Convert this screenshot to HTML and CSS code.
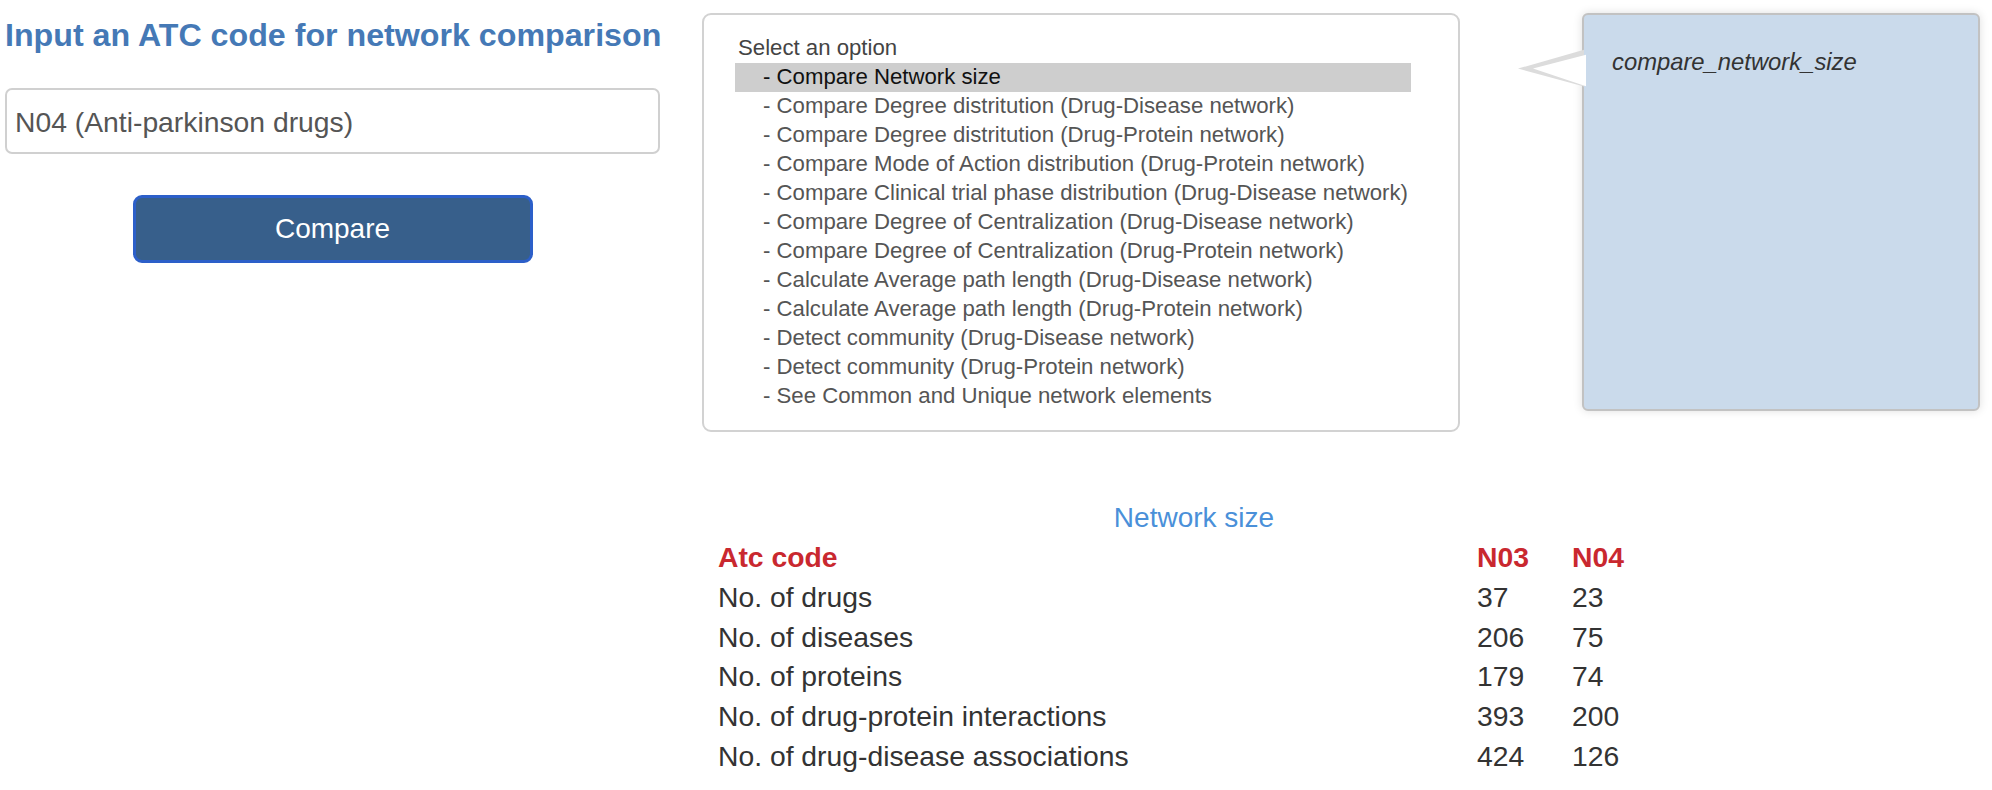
FILE: index.html
```html
<!DOCTYPE html>
<html lang="en">
<head>
<meta charset="utf-8">
<title>ATC network comparison</title>
<link rel="stylesheet" href="styles.css">
</head>
<body>
<div class="page">
  <div class="top">
    <div class="left">
      <h3 class="title">Input an ATC code for network comparison</h3>
      <div class="atc-input">N04 (Anti-parkinson drugs)</div>
      <div class="btn-row"><button class="btn" type="button">Compare</button></div>
    </div>

    <div class="select-box">
      <div class="list">
        <div class="opt group">Select an option</div>
        <div class="opt sub selected">- Compare Network size</div>
        <div class="opt sub">- Compare Degree distritution (Drug-Disease network)</div>
        <div class="opt sub">- Compare Degree distritution (Drug-Protein network)</div>
        <div class="opt sub">- Compare Mode of Action distribution (Drug-Protein network)</div>
        <div class="opt sub">- Compare Clinical trial phase distribution (Drug-Disease network)</div>
        <div class="opt sub">- Compare Degree of Centralization (Drug-Disease network)</div>
        <div class="opt sub">- Compare Degree of Centralization (Drug-Protein network)</div>
        <div class="opt sub">- Calculate Average path length (Drug-Disease network)</div>
        <div class="opt sub">- Calculate Average path length (Drug-Protein network)</div>
        <div class="opt sub">- Detect community (Drug-Disease network)</div>
        <div class="opt sub">- Detect community (Drug-Protein network)</div>
        <div class="opt sub">- See Common and Unique network elements</div>
      </div>
    </div>

    <div class="bubble">
      <svg class="bubble-arrow" width="72" height="46" viewBox="0 0 72 46">
        <polygon points="2,23.6 68,4.8 68,41.6" fill="#dcdcdc"/>
        <polygon points="17,23.6 70,9.8 70,41.3" fill="#ffffff"/>
      </svg>
      <div class="bubble-text">compare_network_size</div>
    </div>
  </div>

  <div class="result">
    <div class="caption">Network size</div>
    <div class="table">
      <div class="cell head">Atc code</div><div class="cell head">N03</div><div class="cell head">N04</div>
      <div class="cell">No. of drugs</div><div class="cell">37</div><div class="cell">23</div>
      <div class="cell">No. of diseases</div><div class="cell">206</div><div class="cell">75</div>
      <div class="cell">No. of proteins</div><div class="cell">179</div><div class="cell">74</div>
      <div class="cell">No. of drug-protein interactions</div><div class="cell">393</div><div class="cell">200</div>
      <div class="cell">No. of drug-disease associations</div><div class="cell">424</div><div class="cell">126</div>
    </div>
  </div>
</div>
</body>
</html>
```

FILE: styles.css
```css
* { box-sizing: border-box; }

body {
  margin: 0;
  background: #ffffff;
  color: #333333;
  font-family: "Liberation Sans", Arial, Helvetica, sans-serif;
}

.top {
  display: flex;
  align-items: flex-start;
  padding-left: 5px;
}

/* left column */
.left {
  width: 655px;
  flex: none;
}

.title {
  margin: 17px 0 0 0;
  font-size: 32.2px;
  line-height: 36px;
  font-weight: bold;
  color: #4579b6;
  white-space: nowrap;
}

.atc-input {
  margin-top: 35px;
  height: 66px;
  border: 2px solid #d0d0d0;
  border-radius: 7px;
  padding: 2px 8px 0 8px;
  font-size: 28.3px;
  line-height: 60px;
  color: #555555;
  white-space: nowrap;
}

.btn-row {
  display: flex;
  justify-content: center;
  margin-top: 41px;
}

.btn {
  width: 400px;
  height: 68px;
  border: 3px solid #2c5fc9;
  border-radius: 9px;
  background: #375f8b;
  color: #ffffff;
  font-family: inherit;
  font-size: 28px;
  padding: 0;
}

/* option list */
.select-box {
  flex: none;
  margin-left: 42px;
  margin-top: 13px;
  width: 758px;
  height: 419px;
  border: 2px solid #d2d2d2;
  border-radius: 9px;
  padding: 19px 0 0 31px;
}

.list {
  width: 676px;
}

.opt {
  height: 29px;
  font-size: 22.2px;
  line-height: 27px;
  white-space: nowrap;
  color: #555555;
}

.group {
  padding-left: 3px;
  color: #444444;
}

.sub {
  padding-left: 28px;
}

.selected {
  background: #cecece;
  color: #111111;
}

/* tooltip bubble */
.bubble {
  position: relative;
  flex: none;
  margin-left: 122px;
  margin-top: 13px;
  width: 398px;
  height: 398px;
  background: #cadaeb;
  border: 2px solid #c2c2c2;
  border-radius: 6px;
  box-shadow: 0 0 10px rgba(0, 0, 0, 0.13);
  padding: 33px 0 0 28px;
}

.bubble-arrow {
  position: absolute;
  left: -68px;
  top: 30px;
}

.bubble-text {
  font-size: 23.8px;
  line-height: 28px;
  font-style: italic;
  color: #333333;
  white-space: nowrap;
}

/* result table */
.result {
  width: 952px;
  margin: 66px 0 0 718px;
}

.caption {
  text-align: center;
  font-size: 28px;
  line-height: 40px;
  color: #4a90d9;
}

.table {
  display: grid;
  grid-template-columns: 759px 95px 98px;
}

.cell {
  font-size: 28.3px;
  line-height: 39.75px;
  color: #333333;
  white-space: nowrap;
}

.head {
  font-weight: bold;
  color: #c9282f;
}
```
